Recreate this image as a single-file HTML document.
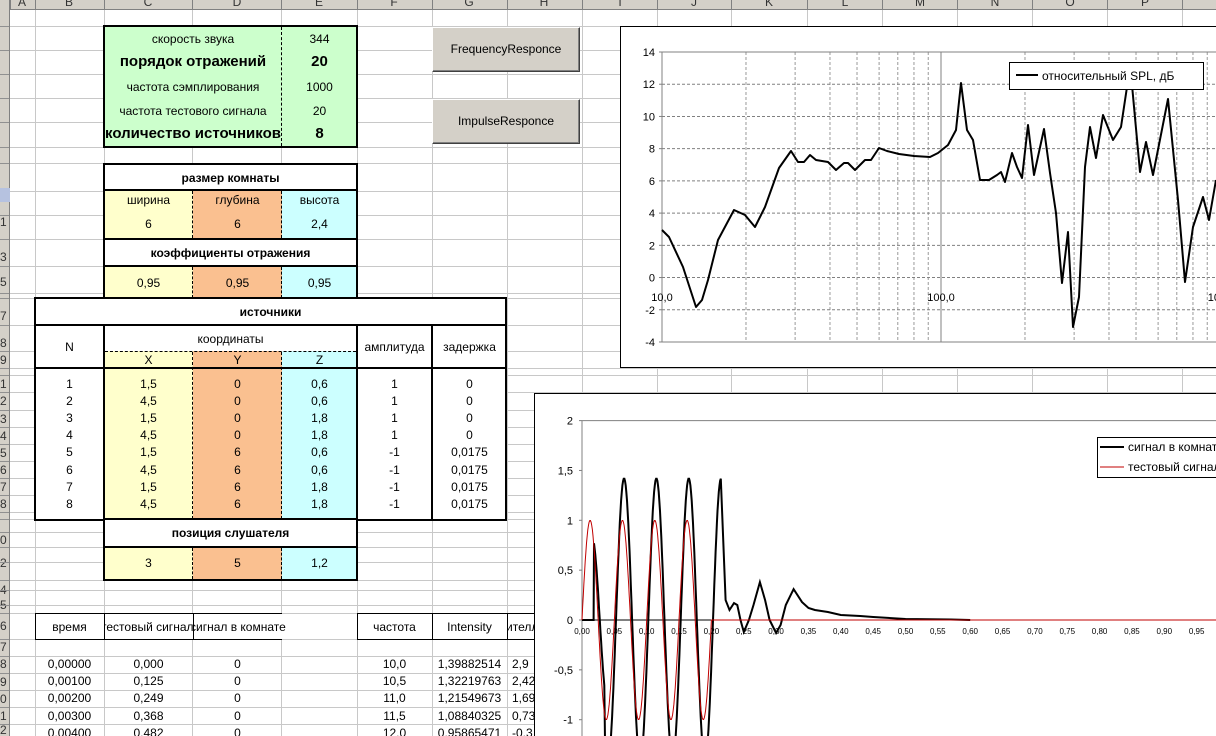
<!DOCTYPE html>
<html style="overflow:hidden"><head><meta charset="utf-8">
<style>
*{margin:0;padding:0;box-sizing:border-box}
html,body{width:1216px;height:736px;overflow:hidden}
body{background:#fff;font-family:"Liberation Sans",Arial,sans-serif;font-size:12px;color:#000}
#root{position:absolute;left:0;top:0;width:1216px;height:736px;overflow:hidden}
.a{position:absolute}
.hl{position:absolute;height:1px;background:#c8c8c8}
.vl{position:absolute;width:1px;background:#c8c8c8}
.t{position:absolute;text-align:center;white-space:nowrap;line-height:14px}
.box{position:absolute;border:2px solid #000}
.btn{position:absolute;background:#d4d0c8;border:1px solid;border-color:#fff #404040 #404040 #fff;box-shadow:inset -1px -1px 0 #808080;font-size:12px;text-align:center}
.dash{position:absolute;border-left:1px dashed #000;width:0}
.bb{font-weight:bold;font-size:15px}
</style></head><body><div id="root">
<div id="grid"></div>
<div class="a" style="left:0;top:0;width:1216px;height:10px;background:#d4d0c8;border-bottom:1px solid #808080;overflow:hidden" id="colh"></div>
<div class="a" style="left:0;top:0;width:10px;height:736px;background:#d4d0c8;border-right:1px solid #808080;overflow:hidden" id="rowh"></div>
<div class="a" style="left:0;top:188px;width:10px;height:14px;background:#b6c2e0"></div>

<div class="a" style="left:104px;top:26px;width:253px;height:121px;background:#ccffcc"></div>
<div class="box" style="left:103px;top:25px;width:255px;height:123px"></div>
<div class="dash" style="left:281px;top:27px;height:119px"></div>
<div class="t" style="left:104px;top:32px;width:178px">скорость звука</div>
<div class="t" style="left:282px;top:32px;width:75px">344</div>
<div class="t bb" style="left:104px;top:55px;width:178px">порядок отражений</div>
<div class="t bb" style="left:282px;top:55px;width:75px">20</div>
<div class="t" style="left:104px;top:80px;width:178px">частота сэмплирования</div>
<div class="t" style="left:282px;top:80px;width:75px">1000</div>
<div class="t" style="left:104px;top:104px;width:178px">частота тестового сигнала</div>
<div class="t" style="left:282px;top:104px;width:75px">20</div>
<div class="t bb" style="left:104px;top:127px;width:178px">количество источников</div>
<div class="t bb" style="left:282px;top:127px;width:75px">8</div>

<div class="a" style="left:104px;top:163px;width:253px;height:140px;background:#fff"></div>
<div class="a" style="left:104px;top:190px;width:89px;height:49px;background:#ffffcc"></div>
<div class="a" style="left:193px;top:190px;width:89px;height:49px;background:#fac090"></div>
<div class="a" style="left:282px;top:190px;width:75px;height:49px;background:#ccffff"></div>
<div class="a" style="left:104px;top:266px;width:89px;height:34px;background:#ffffcc"></div>
<div class="a" style="left:193px;top:266px;width:89px;height:34px;background:#fac090"></div>
<div class="a" style="left:282px;top:266px;width:75px;height:34px;background:#ccffff"></div>
<div class="box" style="left:103px;top:163px;width:255px;height:140px"></div>
<div class="a" style="left:104px;top:189px;width:253px;height:2px;background:#000"></div>
<div class="a" style="left:104px;top:238px;width:253px;height:2px;background:#000"></div>
<div class="a" style="left:104px;top:265px;width:253px;height:2px;background:#000"></div>
<div class="dash" style="left:192px;top:191px;height:47px"></div>
<div class="dash" style="left:281px;top:191px;height:47px"></div>
<div class="dash" style="left:192px;top:267px;height:31px"></div>
<div class="dash" style="left:281px;top:267px;height:31px"></div>
<div class="t" style="left:104px;top:171px;width:253px;font-weight:bold">размер комнаты</div>
<div class="t" style="left:104px;top:193px;width:89px">ширина</div>
<div class="t" style="left:193px;top:193px;width:89px">глубина</div>
<div class="t" style="left:282px;top:193px;width:75px">высота</div>
<div class="t" style="left:104px;top:217px;width:89px">6</div>
<div class="t" style="left:193px;top:217px;width:89px">6</div>
<div class="t" style="left:282px;top:217px;width:75px">2,4</div>
<div class="t" style="left:104px;top:246px;width:253px;font-weight:bold">коэффициенты отражения</div>
<div class="t" style="left:104px;top:276px;width:89px">0,95</div>
<div class="t" style="left:193px;top:276px;width:89px">0,95</div>
<div class="t" style="left:282px;top:276px;width:75px">0,95</div>

<div class="a" style="left:35px;top:298px;width:471px;height:221px;background:#fff"></div>
<div class="a" style="left:104px;top:351px;width:89px;height:168px;background:#ffffcc"></div>
<div class="a" style="left:193px;top:351px;width:89px;height:168px;background:#fac090"></div>
<div class="a" style="left:282px;top:351px;width:75px;height:168px;background:#ccffff"></div>
<div class="box" style="left:34px;top:297px;width:473px;height:224px"></div>
<div class="a" style="left:35px;top:324px;width:471px;height:2px;background:#000"></div>
<div class="a" style="left:35px;top:367px;width:471px;height:2px;background:#000"></div>
<div class="a" style="left:103px;top:325px;width:2px;height:195px;background:#000"></div>
<div class="a" style="left:356px;top:325px;width:2px;height:195px;background:#000"></div>
<div class="a" style="left:431px;top:325px;width:2px;height:195px;background:#000"></div>
<div class="a" style="left:105px;top:351px;width:251px;border-top:1px dashed #000"></div>
<div class="dash" style="left:192px;top:352px;height:167px"></div>
<div class="dash" style="left:281px;top:352px;height:167px"></div>
<div class="t" style="left:35px;top:305px;width:471px;font-weight:bold">источники</div>
<div class="t" style="left:35px;top:340px;width:69px">N</div>
<div class="t" style="left:104px;top:332px;width:253px">координаты</div>
<div class="t" style="left:104px;top:353px;width:89px">X</div>
<div class="t" style="left:193px;top:353px;width:89px">Y</div>
<div class="t" style="left:282px;top:353px;width:75px">Z</div>
<div class="t" style="left:357px;top:340px;width:75px">амплитуда</div>
<div class="t" style="left:432px;top:340px;width:75px">задержка</div>
<div id="src"></div>

<div class="a" style="left:104px;top:548px;width:89px;height:31px;background:#ffffcc"></div>
<div class="a" style="left:193px;top:548px;width:89px;height:31px;background:#fac090"></div>
<div class="a" style="left:282px;top:548px;width:75px;height:31px;background:#ccffff"></div>
<div class="a" style="left:104px;top:519px;width:253px;height:28px;background:#fff"></div>
<div class="box" style="left:103px;top:518px;width:255px;height:63px"></div>
<div class="a" style="left:104px;top:546px;width:253px;height:2px;background:#000"></div>
<div class="dash" style="left:192px;top:548px;height:31px"></div>
<div class="dash" style="left:281px;top:548px;height:31px"></div>
<div class="t" style="left:104px;top:526px;width:253px;font-weight:bold">позиция слушателя</div>
<div class="t" style="left:104px;top:556px;width:89px">3</div>
<div class="t" style="left:193px;top:556px;width:89px">5</div>
<div class="t" style="left:282px;top:556px;width:75px">1,2</div>

<div class="a" style="left:35px;top:613px;width:247px;height:27px;background:#fff;border-top:1px solid #000;border-bottom:1px solid #000"></div>
<div class="a" style="left:357px;top:613px;width:177px;height:27px;background:#fff;border-top:1px solid #000;border-bottom:1px solid #000"></div>
<div class="a" style="left:35px;top:613px;width:1px;height:27px;background:#000"></div>
<div class="a" style="left:104px;top:613px;width:1px;height:27px;background:#000"></div>
<div class="a" style="left:193px;top:613px;width:1px;height:27px;background:#000"></div>
<div class="a" style="left:357px;top:613px;width:1px;height:27px;background:#000"></div>
<div class="a" style="left:432px;top:613px;width:1px;height:27px;background:#000"></div>
<div class="a" style="left:507px;top:613px;width:1px;height:27px;background:#000"></div>
<div class="t" style="left:35px;top:620px;width:69px">время</div>
<div class="a" style="left:105px;top:620px;width:88px;overflow:hidden;white-space:nowrap;line-height:14px"><span style="margin-left:-4px">тестовый сигнал</span></div>
<div class="a" style="left:194px;top:620px;width:110px;overflow:hidden;white-space:nowrap;line-height:14px"><span style="margin-left:-4px">сигнал в комнате</span></div>
<div class="t" style="left:357px;top:620px;width:75px">частота</div>
<div class="t" style="left:432px;top:620px;width:75px">Intensity</div>
<div class="a" style="left:508px;top:620px;width:26px;overflow:hidden;white-space:nowrap;line-height:14px"><span style="margin-left:-2px">ителль</span></div>
<div id="bot"></div>

<div class="btn" style="left:432px;top:27px;width:148px;height:45px;line-height:43px">FrequencyResponce</div>
<div class="btn" style="left:432px;top:99px;width:148px;height:45px;line-height:43px">ImpulseResponce</div>

<svg class="a" style="left:620px;top:26px" width="596" height="343" id="c1"></svg>
<svg class="a" style="left:534px;top:393px" width="682" height="343" id="c2"></svg>
</div>
<script>
var g=document.getElementById('grid'),h='';
var hy=[26,50,74,98,122,147,163,191,215,239,266,293,298,325,351,368,375,392,410,427,444,461,478,495,512,519,532,547,562,580,590,605,613,639,656,673,690,707,724];
hy.forEach(function(y){h+='<div class="hl" style="left:10px;top:'+y+'px;width:1206px"></div>'});
var vx=[35,104,192,281,357,432,507,582,657,731,807,882,957,1032,1107,1182];
vx.forEach(function(x){h+='<div class="vl" style="left:'+x+'px;top:10px;height:726px"></div>'});
g.innerHTML=h;
var cl='ABCDEFGHIJKLMNOP',cc=[22,69,148,237,319,394,469,544,620,694,769,845,920,995,1070,1145],s='';
for(var i=0;i<16;i++)s+='<div class="a" style="left:'+(cc[i]-5)+'px;top:-5px;width:10px;text-align:center;font-size:12px;color:#333">'+cl[i]+'</div>';
vx.forEach(function(x){s+='<div class="a" style="left:'+x+'px;top:0;width:1px;height:10px;background:#808080"></div>'});
s+='<div class="a" style="left:10px;top:0;width:1px;height:10px;background:#808080"></div>';
document.getElementById('colh').innerHTML=s;
var rl=[[195,'9'],[222,'1'],[257,'3'],[282,'5'],[316,'7'],[343,'8'],[360,'9'],[384,'1'],[401,'2'],[419,'3'],[436,'4'],[453,'5'],[470,'6'],[487,'7'],[504,'8'],[540,'0'],[563,'2'],[590,'4'],[605,'5'],[626,'6'],[647,'7'],[664,'8'],[682,'9'],[699,'0'],[716,'1'],[730,'2']];
s='';rl.forEach(function(r){s+='<div class="a" style="left:0;top:'+(r[0]-7)+'px;font-size:12px;color:#333;line-height:14px">'+r[1]+'</div>'});
hy.forEach(function(y){s+='<div class="a" style="left:0;top:'+y+'px;width:10px;height:1px;background:#909090"></div>'});
document.getElementById('rowh').innerHTML=s;
var d=[[1,'1,5',0,'0,6',1,0],[2,'4,5',0,'0,6',1,0],[3,'1,5',0,'1,8',1,0],[4,'4,5',0,'1,8',1,0],[5,'1,5',6,'0,6',-1,'0,0175'],[6,'4,5',6,'0,6',-1,'0,0175'],[7,'1,5',6,'1,8',-1,'0,0175'],[8,'4,5',6,'1,8',-1,'0,0175']];
var xs=[[35,69],[104,89],[193,89],[282,75],[357,75],[432,75]];s='';
d.forEach(function(r,k){var y=377+k*17.1;r.forEach(function(v,j){s+='<div class="t" style="left:'+xs[j][0]+'px;top:'+y+'px;width:'+xs[j][1]+'px">'+v+'</div>'})});
document.getElementById('src').innerHTML=s;
var b=[['0,00000','0,000','0','10,0','1,39882514','2,9'],['0,00100','0,125','0','10,5','1,32219763','2,42'],['0,00200','0,249','0','11,0','1,21549673','1,69'],['0,00300','0,368','0','11,5','1,08840325','0,73'],['0,00400','0,482','0','12,0','0,95865471','-0,3']];
var bx=[[35,69],[104,89],[193,89],[357,75],[432,75]];s='';
b.forEach(function(r,k){var y=657+k*17.2;for(var j=0;j<5;j++)s+='<div class="t" style="left:'+bx[j][0]+'px;top:'+y+'px;width:'+bx[j][1]+'px">'+r[j]+'</div>';s+='<div class="a" style="left:512px;top:'+y+'px;line-height:14px">'+r[5]+'</div>'});
document.getElementById('bot').innerHTML=s;

var o1x=620,o1y=26;
s='<rect x="0.5" y="0.5" width="700" height="341" fill="#fff" stroke="#000"/>';
var px0=662-o1x,dec=279;
for(var dd=0;dd<2;dd++)for(var k=2;k<=9;k++){var x=px0+dec*(dd+Math.log10(k));if(x<600)s+='<line x1="'+x+'" y1="'+(52-o1y)+'" x2="'+x+'" y2="'+(342-o1y)+'" stroke="#999" stroke-dasharray="3,2"/>'}
for(var v=12;v>=-2;v-=2){var y=52+(14-v)*16.11-o1y;s+='<line x1="'+px0+'" y1="'+y+'" x2="600" y2="'+y+'" stroke="#808080" stroke-dasharray="3,2"/>'}
s+='<line x1="'+px0+'" y1="'+(52-o1y)+'" x2="600" y2="'+(52-o1y)+'" stroke="#808080"/>';
s+='<line x1="'+px0+'" y1="'+(342-o1y)+'" x2="600" y2="'+(342-o1y)+'" stroke="#808080"/>';
s+='<line x1="'+px0+'" y1="'+(52-o1y)+'" x2="'+px0+'" y2="'+(342-o1y)+'" stroke="#808080"/>';
s+='<line x1="'+(941-o1x)+'" y1="'+(52-o1y)+'" x2="'+(941-o1x)+'" y2="'+(342-o1y)+'" stroke="#808080"/>';
for(var v=14;v>=-4;v-=2){var y=52+(14-v)*16.11-o1y;s+='<text x="'+(px0-7)+'" y="'+(y+4)+'" font-size="11" text-anchor="end" font-family="Liberation Sans">'+v+'</text><line x1="'+(px0-3)+'" y1="'+y+'" x2="'+px0+'" y2="'+y+'" stroke="#808080"/>'}
s+='<text x="'+(px0)+'" y="'+(301-o1y)+'" font-size="11" text-anchor="middle" font-family="Liberation Sans">10,0</text>';
s+='<text x="'+(941-o1x)+'" y="'+(301-o1y)+'" font-size="11" text-anchor="middle" font-family="Liberation Sans">100,0</text>';
s+='<text x="'+(1220-o1x)+'" y="'+(301-o1y)+'" font-size="11" text-anchor="middle" font-family="Liberation Sans">1000</text>';
var p=[[662,230],[669,237],[683,267],[696,307],[702,300],[708,280],[718,240],[734,210],[745,215],[755,227],[765,207],[779,168],[791,151],[798,162],[804,162],[810,155],[816,160],[828,162],[836,170],[844,163],[848,163],[855,170],[865,160],[871,160],[879,148],[887,151],[899,154],[914,156],[930,157],[938,153],[948,145],[956,130],[961,83],[967,130],[973,140],[980,180],[989,180],[997,175],[1001,172],[1005,182],[1012,153],[1017,167],[1022,178],[1028,125],[1034,175],[1044,129],[1050,173],[1056,213],[1062,283],[1068,232],[1073,327],[1079,297],[1085,167],[1090,127],[1096,158],[1103,115],[1113,140],[1121,127],[1127,87],[1132,85],[1140,172],[1146,142],[1153,175],[1168,99],[1178,200],[1185,282],[1193,227],[1203,197],[1209,220],[1216,180]];
s+='<polyline fill="none" stroke="#000" stroke-width="2" stroke-linejoin="round" points="'+p.map(function(q){return (q[0]-o1x)+','+(q[1]-o1y)}).join(' ')+'"/>';
s+='<rect x="'+(1009-o1x)+'.5" y="'+(62-o1y)+'.5" width="194" height="27" fill="#fff" stroke="#000"/>';
s+='<line x1="'+(1016-o1x)+'" y1="'+(75-o1y)+'" x2="'+(1038-o1x)+'" y2="'+(75-o1y)+'" stroke="#000" stroke-width="2"/>';
s+='<text x="'+(1042-o1x)+'" y="'+(80-o1y)+'" font-size="12" font-family="Liberation Sans">относительный SPL, дБ</text>';
document.getElementById('c1').innerHTML=s;

var ox=534,oy=393;function X(t){return 582+647*t-ox}function Y(v){return 620-99.7*v-oy}
s='<rect x="0.5" y="0.5" width="700" height="400" fill="#fff" stroke="#000"/>';
s+='<line x1="'+X(0)+'" y1="'+Y(2)+'" x2="690" y2="'+Y(2)+'" stroke="#808080"/>';
s+='<line x1="'+X(0)+'" y1="'+Y(2)+'" x2="'+X(0)+'" y2="350" stroke="#808080"/>';
[[2,'2'],[1.5,'1,5'],[1,'1'],[0.5,'0,5'],[0,'0'],[-0.5,'-0,5'],[-1,'-1']].forEach(function(q){s+='<text x="'+(X(0)-9)+'" y="'+(Y(q[0])+4)+'" font-size="11" text-anchor="end" font-family="Liberation Sans">'+q[1]+'</text><line x1="'+(X(0)-3)+'" y1="'+Y(q[0])+'" x2="'+X(0)+'" y2="'+Y(q[0])+'" stroke="#808080"/>'});
for(var i=0;i<20;i++){var t=i*0.05;s+='<text x="'+X(t)+'" y="'+(Y(0)+14)+'" font-size="8" text-anchor="middle" font-family="Liberation Sans">'+t.toFixed(2).replace('.',',')+'</text>'}
s+='<line x1="'+X(0)+'" y1="'+Y(0)+'" x2="690" y2="'+Y(0)+'" stroke="#000"/>';
var pts=[];
for(var t=0;t<=0.0185;t+=0.001)pts.push([t,0]);
for(var t=0.0185;t<=0.2151;t+=0.001){var a=t<0.035?0.85:1.42;pts.push([t,a*Math.sin(2*Math.PI*20*(t-0.0025))])}
[[0.222,0.2],[0.228,0.1],[0.235,0.17],[0.24,0.15],[0.245,0.0],[0.25,-0.12],[0.258,0.0],[0.265,0.15],[0.275,0.38],[0.283,0.2],[0.29,0.0],[0.3,-0.13],[0.307,-0.05],[0.315,0.15],[0.327,0.31],[0.34,0.18],[0.35,0.12],[0.36,0.1],[0.38,0.08],[0.4,0.05],[0.43,0.04],[0.45,0.03],[0.5,0.01],[0.57,0.005],[0.6,0]].forEach(function(q){pts.push(q)});
s+='<polyline fill="none" stroke="#000" stroke-width="2" points="'+pts.map(function(q){return X(q[0]).toFixed(1)+','+Y(q[1]).toFixed(1)}).join(' ')+'"/>';
var r=[];for(var i=0;i<=200;i++){var t=i/1000;r.push([t,Math.sin(2*Math.PI*20*t)])}r.push([0.2,0]);r.push([1.2,0]);
s+='<polyline fill="none" stroke="#c00000" stroke-width="1" points="'+r.map(function(q){return X(q[0]).toFixed(1)+','+Y(q[1]).toFixed(1)}).join(' ')+'"/>';
s+='<rect x="'+(1097-ox)+'.5" y="'+(437-oy)+'.5" width="200" height="40" fill="#fff" stroke="#000"/>';
s+='<line x1="'+(1100-ox)+'" y1="'+(447-oy)+'" x2="'+(1124-ox)+'" y2="'+(447-oy)+'" stroke="#000" stroke-width="2"/>';
s+='<line x1="'+(1100-ox)+'" y1="'+(467-oy)+'" x2="'+(1124-ox)+'" y2="'+(467-oy)+'" stroke="#c00000"/>';
s+='<text x="'+(1128-ox)+'" y="'+(451-oy)+'" font-size="12" font-family="Liberation Sans">сигнал в комнате</text>';
s+='<text x="'+(1128-ox)+'" y="'+(471-oy)+'" font-size="12" font-family="Liberation Sans">тестовый сигнал</text>';
document.getElementById('c2').innerHTML=s;
</script>
</body></html>
